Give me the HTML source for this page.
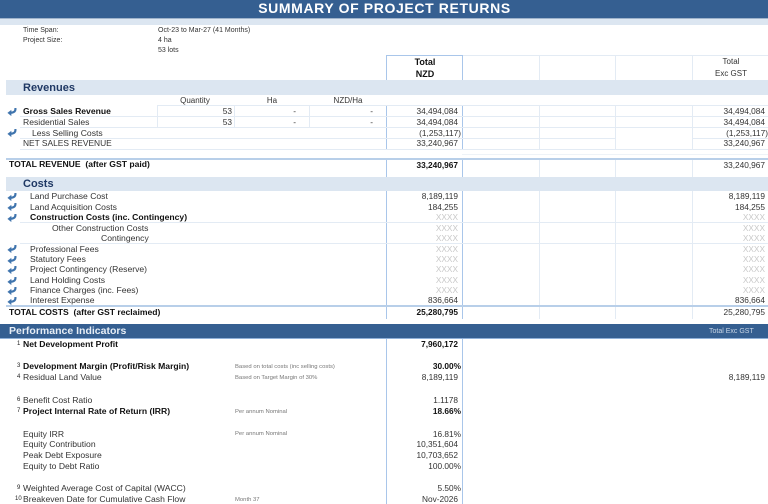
<!DOCTYPE html>
<html><head><meta charset="utf-8">
<style>
html,body{margin:0;padding:0;background:#fff}
#p{position:relative;width:768px;height:504px;overflow:hidden;background:#fff;font-family:"Liberation Sans",sans-serif;font-size:8.6px;color:#333;filter:blur(.3px)}
#p div{position:absolute}
.t{white-space:nowrap;line-height:12px;height:12px}
.r{white-space:nowrap;line-height:12px;height:12px;text-align:right;width:90px;font-size:8.3px}
.c{white-space:nowrap;line-height:12px;height:12px;text-align:center;width:80px;font-size:9px}
.b{font-weight:bold;color:#111}
.x{color:#c8c8c8}
.s{font-size:7px}
.n{font-size:5.9px;color:#777}
.h{background:#e3ebf4;height:1px}
.v{background:#e3ebf4;width:1px}
.vb{background:#a9c6ea;width:1px}
.bd{background:#dce6f1}
.bb{background:#b8cfe9}
.w{background:#fff}
.sec{font-size:11px;font-weight:bold;color:#1f3864}
.sup{font-size:6px;color:#222;font-weight:normal}
svg.a{position:absolute;left:6.5px;width:10px;height:8px}
</style></head><body><div id="p">
<svg width="0" height="0" style="position:absolute"><defs><symbol id="ar" viewBox="0 0 10 8"><path d="M8.3 0C8.9 3 7.2 4.7 3.6 4.7" fill="none" stroke="#3f74ad" stroke-width="2.2"/><path d="M.6 4.9 4.2 2.1V7.8Z" fill="#3f74ad" stroke="#3f74ad" stroke-width=".3" stroke-linejoin="round"/></symbol></defs></svg>

<div style="left:0;top:0;width:768px;height:18px;background:#355f91"></div>
<div style="left:0;top:18px;width:768px;height:1px;background:#9fb3cb"></div>
<div class="bd" style="left:0;top:19px;width:768px;height:6px"></div>
<div class="t" style="left:0;top:0;width:769px;height:16px;line-height:16px;text-align:center;font-size:14px;font-weight:bold;color:#fff;letter-spacing:.62px">SUMMARY OF PROJECT RETURNS</div>

<div class="h" style="left:386px;top:55px;width:382px"></div>
<div class="v" style="left:539px;top:55px;height:264px"></div>
<div class="v" style="left:615px;top:55px;height:264px"></div>
<div class="v" style="left:692px;top:55px;height:264px"></div>
<div class="h" style="left:386px;top:55px;width:77px;background:#a9c6ea"></div>

<div class="vb" style="left:386px;top:55px;height:449px"></div>
<div class="vb" style="left:462px;top:55px;height:449px"></div>

<div class="w" style="left:380px;top:95px;width:388px;height:10px"></div>
<div class="w" style="left:380px;top:150px;width:388px;height:8px"></div>

<div class="bd" style="left:6px;top:80px;width:762px;height:15px"></div>
<div class="bd" style="left:6px;top:177px;width:762px;height:14px"></div>

<div class="h" style="left:157px;top:105px;width:611px"></div>
<div class="h" style="left:20px;top:116px;width:748px"></div>
<div class="h" style="left:20px;top:127px;width:748px"></div>
<div class="h" style="left:20px;top:138px;width:595px"></div>
<div class="h" style="left:692px;top:138px;width:76px"></div>
<div class="h" style="left:20px;top:149px;width:748px"></div>
<div class="h" style="left:462px;top:154px;width:306px;background:#eef3f8"></div>
<div class="v" style="left:157px;top:105px;height:22px"></div>
<div class="v" style="left:234px;top:105px;height:22px"></div>
<div class="v" style="left:309px;top:105px;height:22px"></div>
<div class="bb" style="left:6px;top:158px;width:762px;height:2px"></div>
<div class="h" style="left:20px;top:222px;width:748px"></div>
<div class="h" style="left:20px;top:243px;width:748px"></div>
<div class="bb" style="left:6px;top:305px;width:762px;height:2px"></div>

<div class="w" style="left:0;top:319px;width:768px;height:5px"></div>
<div style="left:0;top:324px;width:768px;height:14px;background:#355f91"></div>
<div style="left:0;top:338px;width:768px;height:1px;background:#8fb0d8"></div>

<div class="t s" style="left:23px;top:25px">Time Span:</div>
<div class="t s" style="left:23px;top:35px">Project Size:</div>
<div class="t s" style="left:158px;top:25px">Oct-23 to Mar-27 (41 Months)</div>
<div class="t s" style="left:158px;top:35px">4 ha</div>
<div class="t s" style="left:158px;top:45px">53 lots</div>

<div class="c b" style="left:385px;top:56px">Total</div>
<div class="c b" style="left:385px;top:68px">NZD</div>
<div class="c" style="left:691px;top:56px;font-size:8px">Total</div>
<div class="c" style="left:691px;top:68px;font-size:8px">Exc GST</div>

<div class="t sec" style="left:23px;top:82px">Revenues</div>
<div class="c" style="left:155px;top:95px;font-size:8px">Quantity</div>
<div class="c" style="left:232px;top:95px;font-size:8px">Ha</div>
<div class="c" style="left:308px;top:95px;font-size:8px">NZD/Ha</div>

<svg class="a" style="top:108px"><use href="#ar"/></svg>
<svg class="a" style="top:129px"><use href="#ar"/></svg>
<div class="t b" style="left:23px;top:105px">Gross Sales Revenue</div>
<div class="t" style="left:23px;top:116px">Residential Sales</div>
<div class="t" style="left:32px;top:127px">Less Selling Costs</div>
<div class="t" style="left:23px;top:137px;font-size:8.4px">NET SALES REVENUE</div>
<div class="r" style="left:142px;top:105px">53</div>
<div class="r" style="left:142px;top:116px">53</div>
<div class="r" style="left:206px;top:105px">-</div>
<div class="r" style="left:206px;top:116px">-</div>
<div class="r" style="left:283px;top:105px">-</div>
<div class="r" style="left:283px;top:116px">-</div>

<div class="r" style="left:368px;top:105px">34,494,084</div>
<div class="r" style="left:368px;top:116px">34,494,084</div>
<div class="r" style="left:371px;top:127px">(1,253,117)</div>
<div class="r" style="left:368px;top:137px">33,240,967</div>
<div class="r" style="left:675px;top:105px">34,494,084</div>
<div class="r" style="left:675px;top:116px">34,494,084</div>
<div class="r" style="left:678px;top:127px">(1,253,117)</div>
<div class="r" style="left:675px;top:137px">33,240,967</div>

<div class="t b" style="left:9px;top:158px">TOTAL REVENUE&nbsp; (after GST paid)</div>
<div class="r b" style="left:368px;top:159px">33,240,967</div>
<div class="r" style="left:675px;top:159px">33,240,967</div>

<div class="t sec" style="left:23px;top:178px">Costs</div>
<svg class="a" style="top:193px"><use href="#ar"/></svg>
<svg class="a" style="top:203px"><use href="#ar"/></svg>
<svg class="a" style="top:214px"><use href="#ar"/></svg>
<svg class="a" style="top:245px"><use href="#ar"/></svg>
<svg class="a" style="top:256px"><use href="#ar"/></svg>
<svg class="a" style="top:266px"><use href="#ar"/></svg>
<svg class="a" style="top:277px"><use href="#ar"/></svg>
<svg class="a" style="top:287px"><use href="#ar"/></svg>
<svg class="a" style="top:297px"><use href="#ar"/></svg>

<div class="t" style="left:30px;top:190px">Land Purchase Cost</div>
<div class="t" style="left:30px;top:201px">Land Acquisition Costs</div>
<div class="t b" style="left:30px;top:211px">Construction Costs (inc. Contingency)</div>
<div class="t" style="left:52px;top:222px">Other Construction Costs</div>
<div class="t" style="left:101px;top:232px">Contingency</div>
<div class="t" style="left:30px;top:243px">Professional Fees</div>
<div class="t" style="left:30px;top:253px">Statutory Fees</div>
<div class="t" style="left:30px;top:263px">Project Contingency (Reserve)</div>
<div class="t" style="left:30px;top:274px">Land Holding Costs</div>
<div class="t" style="left:30px;top:284px">Finance Charges (inc. Fees)</div>
<div class="t" style="left:30px;top:294px">Interest Expense</div>
<div class="t b" style="left:9px;top:306px">TOTAL COSTS&nbsp; (after GST reclaimed)</div>

<div class="r" style="left:368px;top:190px">8,189,119</div>
<div class="r" style="left:368px;top:201px">184,255</div>
<div class="r x" style="left:368px;top:211px">XXXX</div>
<div class="r x" style="left:368px;top:222px">XXXX</div>
<div class="r x" style="left:368px;top:232px">XXXX</div>
<div class="r x" style="left:368px;top:243px">XXXX</div>
<div class="r x" style="left:368px;top:253px">XXXX</div>
<div class="r x" style="left:368px;top:263px">XXXX</div>
<div class="r x" style="left:368px;top:274px">XXXX</div>
<div class="r x" style="left:368px;top:284px">XXXX</div>
<div class="r" style="left:368px;top:294px">836,664</div>
<div class="r b" style="left:368px;top:306px">25,280,795</div>

<div class="r" style="left:675px;top:190px">8,189,119</div>
<div class="r" style="left:675px;top:201px">184,255</div>
<div class="r x" style="left:675px;top:211px">XXXX</div>
<div class="r x" style="left:675px;top:222px">XXXX</div>
<div class="r x" style="left:675px;top:232px">XXXX</div>
<div class="r x" style="left:675px;top:243px">XXXX</div>
<div class="r x" style="left:675px;top:253px">XXXX</div>
<div class="r x" style="left:675px;top:263px">XXXX</div>
<div class="r x" style="left:675px;top:274px">XXXX</div>
<div class="r x" style="left:675px;top:284px">XXXX</div>
<div class="r" style="left:675px;top:294px">836,664</div>
<div class="r" style="left:675px;top:306px">25,280,795</div>

<div class="t" style="left:9px;top:325px;font-size:10.5px;font-weight:bold;color:#e6edf5">Performance Indicators</div>
<div class="t" style="left:709px;top:326px;font-size:7px;color:#c9d6e6">Total Exc GST</div>

<div class="t sup" style="left:17px;top:338px">1</div>
<div class="t sup" style="left:17px;top:360px">3</div>
<div class="t sup" style="left:17px;top:371px">4</div>
<div class="t sup" style="left:17px;top:394px">6</div>
<div class="t sup" style="left:17px;top:405px">7</div>
<div class="t sup" style="left:17px;top:482px">9</div>
<div class="t sup" style="left:15px;top:493px">10</div>

<div class="t b" style="left:23px;top:338px">Net Development Profit</div>
<div class="t b" style="left:23px;top:360px">Development Margin (Profit/Risk Margin)</div>
<div class="t" style="left:23px;top:371px">Residual Land Value</div>
<div class="t" style="left:23px;top:394px">Benefit Cost Ratio</div>
<div class="t b" style="left:23px;top:405px">Project Internal Rate of Return (IRR)</div>
<div class="t" style="left:23px;top:428px">Equity IRR</div>
<div class="t" style="left:23px;top:438px">Equity Contribution</div>
<div class="t" style="left:23px;top:449px">Peak Debt Exposure</div>
<div class="t" style="left:23px;top:460px">Equity to Debt Ratio</div>
<div class="t" style="left:23px;top:482px">Weighted Average Cost of Capital (WACC)</div>
<div class="t" style="left:23px;top:493px">Breakeven Date for Cumulative Cash Flow</div>

<div class="t n" style="left:235px;top:361px">Based on total costs (inc selling costs)</div>
<div class="t n" style="left:235px;top:372px">Based on Target Margin of 30%</div>
<div class="t n" style="left:235px;top:406px">Per annum Nominal</div>
<div class="t n" style="left:235px;top:428px">Per annum Nominal</div>
<div class="t n" style="left:235px;top:494px">Month 37</div>

<div class="r b" style="left:368px;top:338px">7,960,172</div>
<div class="r b" style="left:371px;top:360px">30.00%</div>
<div class="r" style="left:368px;top:371px">8,189,119</div>
<div class="r" style="left:368px;top:394px">1.1178</div>
<div class="r b" style="left:371px;top:405px">18.66%</div>
<div class="r" style="left:371px;top:428px">16.81%</div>
<div class="r" style="left:368px;top:438px">10,351,604</div>
<div class="r" style="left:368px;top:449px">10,703,652</div>
<div class="r" style="left:371px;top:460px">100.00%</div>
<div class="r" style="left:371px;top:482px">5.50%</div>
<div class="r" style="left:368px;top:493px">Nov-2026</div>
<div class="r" style="left:675px;top:371px">8,189,119</div>
</div></body></html>
